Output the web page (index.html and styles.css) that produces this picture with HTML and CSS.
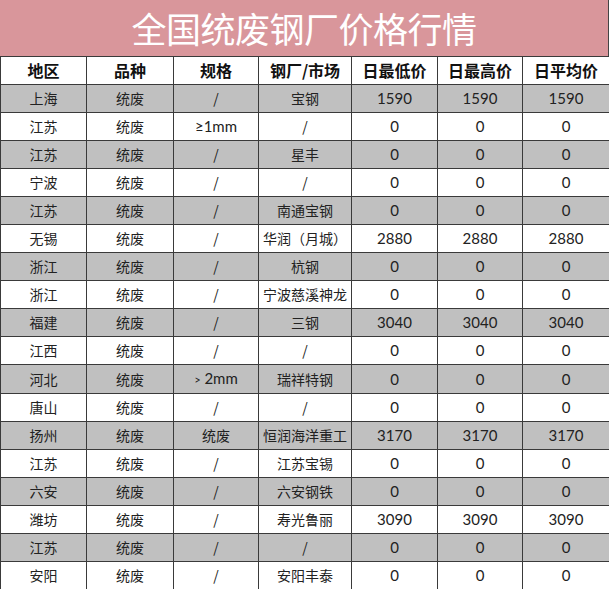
FILE: index.html
```html
<!DOCTYPE html>
<html lang="zh">
<head>
<meta charset="utf-8">
<link rel="stylesheet" href="styles.css">
</head>
<body>
<div class="sheet">
  <div class="title">全国统废钢厂价格行情</div>
  <table class="grid">
    <colgroup>
      <col class="c1"><col class="c2"><col class="c3"><col class="c4"><col class="c5"><col class="c6"><col class="c7">
    </colgroup>
    <thead>
      <tr><th>地区</th><th>品种</th><th>规格</th><th>钢厂/市场</th><th>日最低价</th><th>日最高价</th><th>日平均价</th></tr>
    </thead>
    <tbody>
      <tr class="g"><td>上海</td><td>统废</td><td>/</td><td>宝钢</td><td class="n">1590</td><td class="n">1590</td><td class="n">1590</td></tr>
      <tr><td>江苏</td><td>统废</td><td class="n">≥1mm</td><td>/</td><td class="n">0</td><td class="n">0</td><td class="n">0</td></tr>
      <tr class="g"><td>江苏</td><td>统废</td><td>/</td><td>星丰</td><td class="n">0</td><td class="n">0</td><td class="n">0</td></tr>
      <tr><td>宁波</td><td>统废</td><td>/</td><td>/</td><td class="n">0</td><td class="n">0</td><td class="n">0</td></tr>
      <tr class="g"><td>江苏</td><td>统废</td><td>/</td><td>南通宝钢</td><td class="n">0</td><td class="n">0</td><td class="n">0</td></tr>
      <tr><td>无锡</td><td>统废</td><td>/</td><td>华润（月城）</td><td class="n">2880</td><td class="n">2880</td><td class="n">2880</td></tr>
      <tr class="g"><td>浙江</td><td>统废</td><td>/</td><td>杭钢</td><td class="n">0</td><td class="n">0</td><td class="n">0</td></tr>
      <tr><td>浙江</td><td>统废</td><td>/</td><td>宁波慈溪神龙</td><td class="n">0</td><td class="n">0</td><td class="n">0</td></tr>
      <tr class="g"><td>福建</td><td>统废</td><td>/</td><td>三钢</td><td class="n">3040</td><td class="n">3040</td><td class="n">3040</td></tr>
      <tr><td>江西</td><td>统废</td><td>/</td><td>/</td><td class="n">0</td><td class="n">0</td><td class="n">0</td></tr>
      <tr class="g"><td>河北</td><td>统废</td><td class="n"><span class="gt">˃</span> 2mm</td><td>瑞祥特钢</td><td class="n">0</td><td class="n">0</td><td class="n">0</td></tr>
      <tr><td>唐山</td><td>统废</td><td>/</td><td>/</td><td class="n">0</td><td class="n">0</td><td class="n">0</td></tr>
      <tr class="g"><td>扬州</td><td>统废</td><td>统废</td><td>恒润海洋重工</td><td class="n">3170</td><td class="n">3170</td><td class="n">3170</td></tr>
      <tr><td>江苏</td><td>统废</td><td>/</td><td>江苏宝锡</td><td class="n">0</td><td class="n">0</td><td class="n">0</td></tr>
      <tr class="g"><td>六安</td><td>统废</td><td>/</td><td>六安钢铁</td><td class="n">0</td><td class="n">0</td><td class="n">0</td></tr>
      <tr><td>潍坊</td><td>统废</td><td>/</td><td>寿光鲁丽</td><td class="n">3090</td><td class="n">3090</td><td class="n">3090</td></tr>
      <tr class="g"><td>江苏</td><td>统废</td><td>/</td><td>/</td><td class="n">0</td><td class="n">0</td><td class="n">0</td></tr>
      <tr><td>安阳</td><td>统废</td><td>/</td><td>安阳丰泰</td><td class="n">0</td><td class="n">0</td><td class="n">0</td></tr>
    </tbody>
  </table>
</div>
</body>
</html>
```

FILE: styles.css
```css
html, body {
  margin: 0;
  padding: 0;
  background: #ffffff;
}
.sheet {
  width: 609px;
  font-family: "Noto Sans CJK SC", "Noto Sans", sans-serif;
  color: #1a1a1a;
}
.title {
  height: 56px;
  background: #d9969b;
  color: #ffffff;
  font-size: 35px;
  line-height: 56px;
  text-align: center;
  letter-spacing: -0.5px;
  box-sizing: border-box;
  border-right: 1px solid #444;
}
.grid {
  width: 609px;
  border-collapse: collapse;
  table-layout: fixed;
}
.c1 { width: 86px; }
.c2 { width: 87px; }
.c3 { width: 85px; }
.c4 { width: 93px; }
.c5 { width: 86px; }
.c6 { width: 85px; }
.c7 { width: 87px; }
.grid th, .grid td {
  border: 1px solid #3a3a3a;
  height: 27px;
  padding: 0;
  text-align: center;
  vertical-align: middle;
  white-space: nowrap;
  overflow: hidden;
}
.grid th {
  font-size: 16px;
  font-weight: 700;
  color: #111;
  line-height: 27px;
}
.grid td {
  font-size: 14px;
  line-height: 27px;
  color: #222;
}
.grid td.n {
  font-family: "Lato", "Open Sans", sans-serif;
  font-size: 15px;
}
.gt {
  font-size: 11px;
}
.grid tr.g td {
  background: #c0c0c0;
}
```
